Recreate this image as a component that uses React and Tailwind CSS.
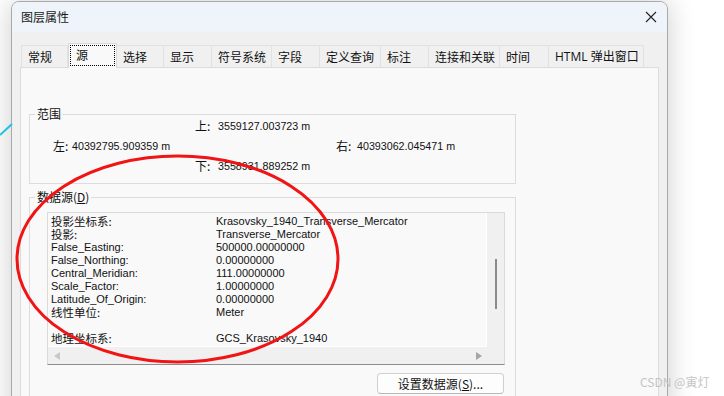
import React from "react";

const CJK = "font-['Noto_Sans_CJK_SC','Noto_Sans',sans-serif]";
const LAT = "font-['Liberation_Sans','Noto_Sans_CJK_SC',sans-serif]";

const tabs = [
  ["常规", 47],
  ["源", 49],
  ["选择", 47],
  ["显示", 48],
  ["符号系统", 60],
  ["字段", 48],
  ["定义查询", 61],
  ["标注", 48],
  ["连接和关联", 71],
  ["时间", 49],
  ["HTML 弹出窗口", 95],
];

const rows = [
  ["投影坐标系:", "Krasovsky_1940_Transverse_Mercator", true],
  ["投影:", "Transverse_Mercator", true],
  ["False_Easting:", "500000.00000000", false],
  ["False_Northing:", "0.00000000", false],
  ["Central_Meridian:", "111.00000000", false],
  ["Scale_Factor:", "1.00000000", false],
  ["Latitude_Of_Origin:", "0.00000000", false],
  ["线性单位:", "Meter", true],
  ["", "", false],
  ["地理坐标系:", "GCS_Krasovsky_1940", true],
];

export default function App() {
  return (
    <div className="relative w-[724px] h-[396px] overflow-hidden bg-white">
      {/* window */}
      <div className="ml-[11px] pt-[1px]">
        <div className="w-[657px] h-[430px] rounded-t-[8px] border border-[#a9a9a9] bg-[#f0f0f0] overflow-hidden shadow-[0_0_28px_rgba(0,0,0,0.2)]">
          {/* title bar */}
          <div className="h-[30px] bg-[#eef4f9] flex items-center justify-between pl-[9px] pr-[9px]">
            <span className={`${CJK} text-[12px] text-[#1a1a1a]`}>图层属性</span>
            <svg width="12" height="12" viewBox="0 0 12 12" className="mr-[1px]">
              <path d="M1 1 L11 11 M11 1 L1 11" stroke="#222" strokeWidth="1.1" fill="none" />
            </svg>
          </div>
          {/* tabs */}
          <div className="flex items-end h-[35px] pl-[9px]">
            {tabs.map(([t, w], i) => {
              const sel = i === 1;
              return (
                <div
                  key={t}
                  style={{ width: w }}
                  className={
                    sel
                      ? `relative z-10 h-[25px] -mb-px border border-b-0 border-[#d9d9d9] bg-[#f9f9f9] p-[1px] pb-[2px]`
                      : `h-[22px] border-t border-r border-[#e2e2e2] ${i === 0 ? "border-l" : ""} bg-[#f0f0f0] flex items-center pl-[6px]`
                  }
                >
                  {sel ? (
                    <div className={`${CJK} h-full border border-dotted border-black flex items-center pl-[5px] pb-[2px] text-[12px] text-[#111]`}>
                      {t}
                    </div>
                  ) : (
                    <span className={`${t.startsWith("HTML") ? "font-['Open_Sans','Noto_Sans_CJK_SC',sans-serif]" : CJK} text-[12px] text-[#111] whitespace-nowrap`}>
                      {t}
                    </span>
                  )}
                </div>
              );
            })}
          </div>
          {/* panel */}
          <div className="ml-[8px] w-[639px] h-[400px] border border-[#dcdcdc] bg-[#f9f9f9] pl-[8px] pt-[46px]">
            {/* 范围 */}
            <div className="relative w-[487px] h-[70px] border border-[#dcdcdc] pt-[1px]">
              <span className={`${CJK} absolute -top-[9px] left-[5px] px-[2px] bg-[#f9f9f9] text-[12px] leading-[16px] text-[#111]`}>范围</span>
              <div className={`${LAT} h-[20px] flex items-center pl-[165px] text-[10.7px] text-[#111]`}>
                <span className={`${CJK} w-[23px] text-[12px]`}>上:</span>
                <span>3559127.003723 m</span>
              </div>
              <div className={`${LAT} h-[20px] flex items-center pl-[23px] text-[10.7px] text-[#111]`}>
                <span className={`${CJK} w-[19px] text-[12px]`}>左:</span>
                <span className="w-[264px]">40392795.909359 m</span>
                <span className={`${CJK} w-[21px] text-[12px]`}>右:</span>
                <span>40393062.045471 m</span>
              </div>
              <div className={`${LAT} h-[20px] flex items-center pl-[165px] text-[10.7px] text-[#111]`}>
                <span className={`${CJK} w-[23px] text-[12px]`}>下:</span>
                <span>3558931.889252 m</span>
              </div>
            </div>
            {/* 数据源 */}
            <div className="relative mt-[13px] w-[487px] h-[240px] border border-[#dcdcdc] pl-[17px] pt-[14px]">
              <span className={`${CJK} absolute -top-[9px] left-[5px] px-[2px] bg-[#f9f9f9] text-[12px] leading-[16px] text-[#111]`}>
                数据源(<span className="underline">D</span>)
              </span>
              {/* list */}
              <div className="w-[458px] h-[153px] border border-[#dadada] border-b-[#8c8c8c] flex flex-col">
                <div className="flex flex-1 min-h-0">
                  <div className={`${LAT} flex-1 bg-[#f9f9f9] border-r border-b border-white pt-[2px] pl-[3px] text-[11px] leading-[13px] text-[#111] overflow-hidden`}>
                    {rows.map(([k, v, cjk], i) => (
                      <div key={i} className="flex h-[13px] whitespace-nowrap">
                        <span className={`w-[165px] ${cjk ? `${CJK} text-[11.5px] leading-[13px]` : ""}`}>{k}</span>
                        <span>{v}</span>
                      </div>
                    ))}
                  </div>
                  <div className="w-[17px] bg-[#f0f0f0] flex justify-center pt-[46px]">
                    <div className="w-[2px] h-[50px] bg-[#8a8a8a]" />
                  </div>
                </div>
                <div className="h-[17px] bg-[#f0f0f0] flex items-center justify-between pl-[6px] pr-[22px]">
                  <svg width="6" height="8" viewBox="0 0 6 8">
                    <path d="M6 0 L0 4 L6 8 Z" fill="#c8c8c8" />
                  </svg>
                  <svg width="6" height="8" viewBox="0 0 6 8">
                    <path d="M0 0 L6 4 L0 8 Z" fill="#a5a5a5" />
                  </svg>
                </div>
              </div>
              <div className="flex justify-end pr-[11px] mt-[8px]">
                <div className={`${CJK} w-[127px] h-[21px] rounded-[4px] border border-[#d0d0d0] border-b-[#b8b8b8] bg-[#fdfdfd] flex items-center justify-center text-[12px] text-[#111]`}>
                  设置数据源(<span className="underline">S</span>)...
                </div>
              </div>
            </div>
          </div>
        </div>
      </div>

      {/* annotations */}
      <svg className="absolute left-0 top-0 pointer-events-none" width="724" height="396">
        <line x1="0" y1="135" x2="12" y2="124" stroke="#16c6e0" strokeWidth="2" />
        <ellipse cx="177.5" cy="259" rx="160.5" ry="103" fill="none" stroke="#f01414" strokeWidth="3" />
      </svg>
      <span className={`${CJK} absolute left-[640px] top-[374px] text-[12px] leading-[16px] text-[#c4c4c4]`}>CSDN @寅灯</span>
    </div>
  );
}
